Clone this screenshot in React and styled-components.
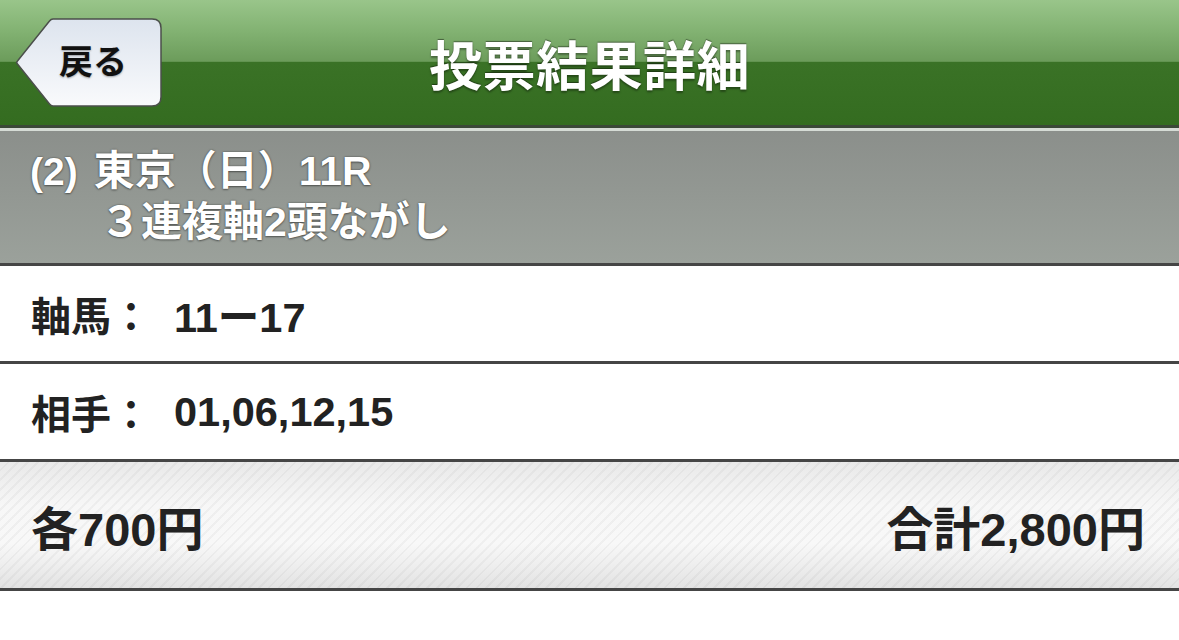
import React from "react";
import styled, { createGlobalStyle } from "styled-components";

const GlobalStyle = createGlobalStyle`
  html, body {
    margin: 0;
    padding: 0;
    background: #ffffff;
  }
  body {
    font-family: "Liberation Sans", "Noto Sans CJK JP", sans-serif;
    -webkit-font-smoothing: antialiased;
  }
`;

const Page = styled.div`
  width: 100%;
  min-height: 640px;
  background: #fff;
`;

const NavBar = styled.header`
  display: grid;
  grid-template-columns: 1fr auto 1fr;
  align-items: center;
  height: 125px;
  background: linear-gradient(
    to bottom,
    #99c58a 0%,
    #82b272 25%,
    #6c9c5b 49%,
    #3a7226 50%,
    #346c20 100%
  );
  border-bottom: 3px solid #3b4838;
  box-shadow: 0 3px 0 #d5dbd5;
  margin-bottom: 3px;
`;

const BackButton = styled.button`
  position: relative;
  justify-self: start;
  margin-left: 15px;
  width: 147px;
  height: 89px;
  padding: 0 0 6px 44px;
  border: none;
  background: none;
  display: flex;
  align-items: center;
  cursor: pointer;
  font-family: "Noto Sans CJK JP", sans-serif;
  font-weight: 700;
  font-size: 34px;
  color: #111;
  text-shadow: 0 1px 2px rgba(0, 0, 0, 0.35);

  & > svg {
    position: absolute;
    inset: 0;
  }
  & > span {
    position: relative;
  }
`;

const Title = styled.h1`
  margin: 0;
  font-family: "Noto Sans CJK JP", sans-serif;
  font-weight: 700;
  font-size: 53px;
  letter-spacing: 0.5px;
  color: #fff;
  text-shadow: 0 -1px 1px rgba(0, 0, 0, 0.45), 0 2px 2px rgba(0, 0, 0, 0.35);
`;

const RaceInfo = styled.section`
  height: 135px;
  box-sizing: border-box;
  padding: 15px 30px 17px;
  background: linear-gradient(to bottom, #8b8f8b, #9ba19b);
  border-bottom: 3px solid #454545;
  color: #fff;
  font-weight: 700;
  font-size: 41px;
  line-height: 50px;
  text-shadow: 0 0 2px rgba(0, 0, 0, 0.5), 0 1px 2px rgba(0, 0, 0, 0.35);
`;

const InfoLine = styled.div`
  white-space: nowrap;
  padding-left: ${(p) => p.$indent || 0}px;
`;

const RaceNo = styled.span`
  margin-right: 16px;
  font-size: 39px;
`;

const DetailRow = styled.div`
  display: flex;
  align-items: center;
  gap: 23px;
  height: 95px;
  padding: 0 31px;
  background: #fff;
  border-bottom: 3px solid #454545;
  color: #222;
  font-weight: 700;
  font-size: 40px;
`;

const Label = styled.span`
  white-space: nowrap;
`;

const Value = styled.span`
  white-space: nowrap;
  font-size: 41.5px;
`;

const TotalRow = styled.div`
  display: flex;
  align-items: center;
  justify-content: space-between;
  height: 126px;
  padding: 0 34px 0 31px;
  border-bottom: 3px solid #454545;
  color: #222;
  font-weight: 700;
  font-size: 47px;
  background:
    repeating-linear-gradient(
      135deg,
      rgba(255, 255, 255, 0) 0px,
      rgba(255, 255, 255, 0) 5px,
      rgba(0, 0, 0, 0.035) 5px,
      rgba(0, 0, 0, 0.035) 7px
    ),
    linear-gradient(to bottom, #e9e9e9 0%, #f7f7f7 35%, #f8f8f8 65%, #e3e3e3 100%);
`;

const BackShape = () => (
  <svg width="147" height="89" viewBox="0 0 147 89">
    <defs>
      <linearGradient id="backFill" x1="0" y1="0" x2="0" y2="1">
        <stop offset="0" stopColor="#dde4ee" />
        <stop offset="1" stopColor="#f9fafc" />
      </linearGradient>
    </defs>
    <path
      d="M38 1 H137 Q146 1 146 10 V79 Q146 88 137 88 H38 Q36 88 34.5 86 L2.5 46 Q1 44.5 2.5 43 L34.5 3 Q36 1 38 1 Z"
      fill="url(#backFill)"
      stroke="#4b4f4b"
      strokeWidth="1.5"
    />
  </svg>
);

const App = () => {
  return (
    <Page>
      <GlobalStyle />
      <NavBar>
        <BackButton type="button">
          <BackShape />
          <span>戻る</span>
        </BackButton>
        <Title>投票結果詳細</Title>
        <div />
      </NavBar>
      <RaceInfo>
        <InfoLine>
          <RaceNo>(2)</RaceNo>東京（日）11R
        </InfoLine>
        <InfoLine $indent={70}>３連複軸2頭ながし</InfoLine>
      </RaceInfo>
      <DetailRow>
        <Label>軸馬：</Label>
        <Value>11ー17</Value>
      </DetailRow>
      <DetailRow>
        <Label>相手：</Label>
        <Value>01,06,12,15</Value>
      </DetailRow>
      <TotalRow>
        <span>各700円</span>
        <span>合計2,800円</span>
      </TotalRow>
    </Page>
  );
};

export default App;
